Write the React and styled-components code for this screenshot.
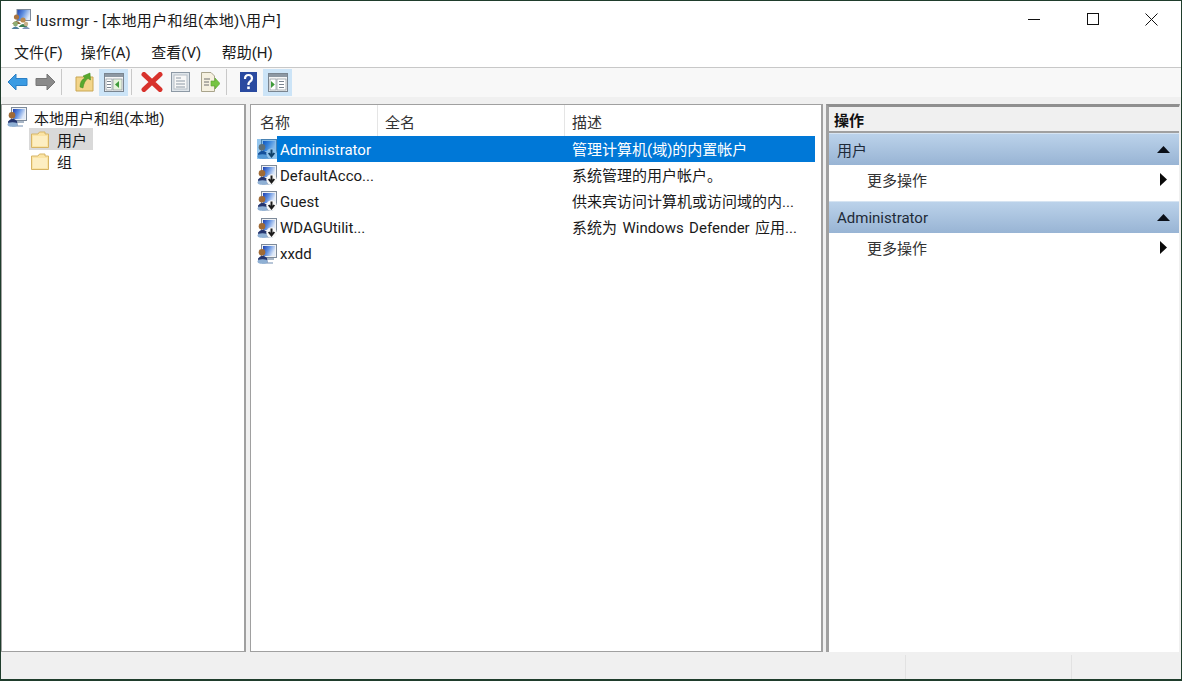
import styled, { createGlobalStyle } from "styled-components";

const GlobalStyle = createGlobalStyle`
    html, body {
        margin: 0;
        padding: 0;
        background: #fff;
    }
    * {
        box-sizing: border-box;
    }
`;

const Window = styled.div`
    width: 1182px;
    height: 681px;
    display: flex;
    flex-direction: column;
    border: 1px solid #1f3d2c;
    border-bottom-width: 2px;
    background: #f0f0f0;
    color: #1a1a1a;
    font-family: Roboto, "Noto Sans CJK SC", sans-serif;
    font-size: 15px;
    overflow: hidden;
`;

const TitleBar = styled.div`
    height: 37px;
    flex: none;
    display: flex;
    align-items: center;
    padding: 0 0 1px 10px;
    background: #fff;
`;

const TitleText = styled.span`
    margin-left: 5px;
    flex: 1;
    letter-spacing: 0.3px;
`;

const WinButton = styled.div`
    width: 59px;
    height: 37px;
    display: flex;
    align-items: center;
    justify-content: center;
`;

const MenuBar = styled.div`
    height: 30px;
    flex: none;
    display: flex;
    align-items: center;
    gap: 20.5px;
    padding: 0 0 2px 13px;
    background: #fff;
    border-bottom: 1px solid #c8c8c8;
`;

const MenuItem = styled.span`
    &:first-child {
        margin-right: -2.5px;
    }
`;

const Toolbar = styled.div`
    height: 29px;
    flex: none;
    display: flex;
    align-items: center;
    padding: 0 0 1px 2px;
    background: #f8f8f8;
`;

const ToolButton = styled.div`
    width: ${(p) => (p.$narrow ? 28 : 29)}px;
    height: 27px;
    margin-left: ${(p) => p.$left || 0}px;
    display: flex;
    align-items: center;
    justify-content: center;
    background: ${(p) => (p.$active ? "#cce4f7" : "transparent")};
`;

const ToolSep = styled.div`
    width: 1px;
    height: 26px;
    margin: 0 ${(p) => p.$gap}px;
    background: #c9c9c9;
`;

const Workspace = styled.div`
    flex: 1;
    min-height: 0;
    display: flex;
    padding-top: 7px;
    background: #f0f0f0;
`;

const Pane = styled.div`
    height: calc(100% + 1px);
    flex: none;
    background: #fff;
    border: 1px solid #a0a0a0;
    border-right-width: 2px;
    border-bottom-width: 2px;
`;

const TreePane = styled(Pane)`
    width: 245px;
    margin-right: 4px;
    padding: 1px 0 0 5px;
`;

const TreeRow = styled.div`
    height: 22px;
    display: flex;
    align-items: center;
    margin-left: ${(p) => p.$indent || 0}px;
`;

const TreeLabel = styled.span`
    height: 22px;
    display: flex;
    align-items: center;
    padding: 0 6px 0 ${(p) => p.$pad || 7}px;
`;

const FolderCell = styled.div`
    height: 22px;
    display: flex;
    align-items: center;
    width: fit-content;
    padding-left: 2px;
    background: ${(p) => (p.$selected ? "#d9d9d9" : "transparent")};
`;

const ListPane = styled(Pane)`
    width: 573px;
    margin-right: 3px;
    padding-right: 6px;
`;

const ListHeader = styled.div`
    height: 31px;
    display: grid;
    grid-template-columns: 127px 187px 1fr;
`;

const HeaderCell = styled.div`
    display: flex;
    align-items: center;
    padding: 2px 0 0 9px;
    border-right: 1px solid #e5e5e5;
    color: #333;
    &:nth-child(2) {
        padding-left: 7px;
    }
    &:last-child {
        border-right: none;
        padding-left: 7px;
    }
`;

const ListRow = styled.div`
    height: 26.2px;
    display: grid;
    grid-template-columns: 127px 187px 1fr;
`;

const NameCell = styled.div`
    display: flex;
    align-items: center;
    padding-left: 6px;
    min-width: 0;
`;

const NameText = styled.span`
    height: 100%;
    flex: 1;
    min-width: 0;
    display: flex;
    align-items: center;
    padding: 1px 0 0 3px;
    white-space: nowrap;
    background: ${(p) => (p.$selected ? "#0078d7" : "transparent")};
    color: ${(p) => (p.$selected ? "#fff" : "inherit")};
`;

const PlainCell = styled.div`
    display: flex;
    align-items: center;
    padding: 0 0 2px 7px;
    white-space: nowrap;
    word-spacing: 1.7px;
    background: ${(p) => (p.$selected ? "#0078d7" : "transparent")};
    color: ${(p) => (p.$selected ? "#fff" : "inherit")};
`;

const ActionPane = styled.div`
    width: 354px;
    height: calc(100% + 1px);
    flex: none;
    background: #fff;
    border-left: 3px solid #a0a0a0;
    border-top: 3px solid #8f8f8f;
    border-bottom: 1px solid #e0e0e0;
    border-right: 1px solid #f0f0f0;
`;

const ActionTitle = styled.div`
    height: 26px;
    display: flex;
    align-items: center;
    padding-left: 5px;
    background: #f0f0f0;
    border-bottom: 2px solid #a0a0a0;
    font-weight: 700;
    color: #111;
`;

const GroupHeader = styled.div`
    height: 32px;
    margin-top: ${(p) => p.$top || 0}px;
    display: flex;
    align-items: center;
    justify-content: space-between;
    padding: 0 9px 0 8px;
    background: linear-gradient(#bbd2ea, #98b4d4);
    border-top: 1px solid #d6e4f2;
    color: #1e2a38;
`;

const ActionItem = styled.div`
    height: 30px;
    display: flex;
    align-items: center;
    justify-content: space-between;
    padding: 0 12px 2px 38px;
    color: #333;
`;

const StatusBar = styled.div`
    height: 27px;
    flex: none;
    display: grid;
    grid-template-columns: 1fr 166px 110px;
    background: #f0f0f0;
`;

const StatusCell = styled.div`
    margin-top: 3px;
    border-left: ${(p) => (p.$first ? "none" : "1px solid #e2e2e2")};
`;

const UpTriangle = () => (
    <svg width="13" height="7" viewBox="0 0 13 7">
        <path d="M6.5 0 L13 7 H0 Z" fill="#0a0f18" />
    </svg>
);

const RightTriangle = () => (
    <svg width="7" height="13" viewBox="0 0 7 13">
        <path d="M0 0 L7 6.5 L0 13 Z" fill="#0a0a0a" />
    </svg>
);

// shared fill for the little monitor screens
const IconDefs = () => (
    <svg width="0" height="0" style={{ position: "absolute" }}>
        <defs>
            <linearGradient id="screen" x1="0" y1="0" x2="1" y2="0.4">
                <stop offset="0" stopColor="#1c3fb0" />
                <stop offset="0.5" stopColor="#5f8fe0" />
                <stop offset="1" stopColor="#dfe9f8" />
            </linearGradient>
        </defs>
    </svg>
);

const TitleIcon = () => (
    <svg width="20" height="20" viewBox="0 0 20 20">
        <rect x="6" y="0.5" width="13.5" height="11" fill="url(#screen)" stroke="#7d8a9a" />
        <circle cx="5.5" cy="8" r="2.6" fill="#a9743f" />
        <path d="M1 15 Q5.5 9 10 15 Z" fill="#8c6a3a" />
        <circle cx="12" cy="11" r="2.6" fill="#b98a4e" />
        <path d="M7.5 18 Q12 12 16.5 18 Z" fill="#3c7f52" />
        <circle cx="4.5" cy="15" r="2.4" fill="#8fae74" />
        <path d="M0.5 20 Q4.5 15 8.5 20 Z" fill="#4f7f9c" />
        <circle cx="15" cy="15" r="2.2" fill="#c7b18b" />
        <path d="M11 20 Q15 15.5 19 20 Z" fill="#7d95b8" />
    </svg>
);

const ComputerUserIcon = ({ arrow, tint }) => (
    <svg width="20" height="20" viewBox="0 0 20 20">
        <rect x="4.5" y="0.5" width="15" height="13" fill="#eef1f5" stroke="#7d8a9a" />
        <rect x="6" y="2" width="12" height="10" fill="url(#screen)" />
        <rect x="9" y="14" width="8" height="2" fill="#a8b6c6" />
        <path d="M5 18 H16 V20 H5 Z" fill="#b7c6d8" />
        <path d="M1 14.5 Q5 9.5 10 14 L10.5 18.5 H1.5 Z" fill="#24356f" />
        <circle cx="5" cy="8.3" r="3.3" fill="#a06a35" />
        <ellipse cx="5.5" cy="17.5" rx="5" ry="2.3" fill="#8fb0d4" />
        {arrow && <circle cx="14.5" cy="14.5" r="5.2" fill="#f8f8f8" />}
        {arrow && <path d="M14.5 10.5 V16 M11.7 14 L14.5 17.5 L17.3 14" fill="none" stroke="#1c1c1c" strokeWidth="2" />}
        {tint && <rect width="20" height="20" fill="#0078d7" opacity="0.42" />}
    </svg>
);

const FolderIcon = () => (
    <svg width="18" height="17" viewBox="0 0 18 17">
        <path d="M0.5 3 H7 L8.5 1 H14 V3 H17.5 V16.5 H0.5 Z" fill="#fbe4a4" stroke="#d7b566" />
        <rect x="2" y="5" width="14" height="10" fill="#fdeec2" />
    </svg>
);

const ArrowBack = () => (
    <svg width="21" height="18" viewBox="0 0 21 18">
        <path d="M9 1 L1 9 L9 17 V12.5 H20 V5.5 H9 Z" fill="#3a9be3" stroke="#2b7fc4" />
    </svg>
);

const ArrowForward = () => (
    <svg width="21" height="18" viewBox="0 0 21 18">
        <path d="M12 1 L20 9 L12 17 V12.5 H1 V5.5 H12 Z" fill="#8a8a8a" stroke="#777" />
    </svg>
);

const FolderUp = () => (
    <svg width="19" height="20" viewBox="0 0 19 20">
        <path d="M1 5 H18 V19 H1 Z" fill="#f3d58a" stroke="#c9a653" />
        <path d="M5 15 Q5 8 10 6 L8 4 L15 1 L15.5 8 L13 6.5 Q9 9 8 16 Z" fill="#58a92e" stroke="#3f8a1f" strokeWidth="0.5" />
    </svg>
);

const PanelIcon = ({ flip }) => (
    <svg width="20" height="19" viewBox="0 0 20 19">
        <rect x="0.5" y="0.5" width="19" height="18" fill="#f6f6f6" stroke="#7a8590" />
        <rect x="1" y="1" width="18" height="3" fill="#8d98a3" />
        <rect x="2" y="6" width="6" height="11" fill="#fff" stroke="#8b949c" strokeWidth="0.7" />
        <rect x="9" y="6" width="9" height="11" fill={flip ? "#fff" : "#e6f3dc"} stroke="#8b949c" strokeWidth="0.7" />
        {flip ? (
            <path d="M3 8 L6.8 11.5 L3 15 Z" fill="#3f9b3a" />
        ) : (
            <path d="M15 8 L11 11.5 L15 15 Z" fill="#3f9b3a" />
        )}
        <path d={flip ? "M11 8.5 H16 M11 11.5 H16 M11 14.5 H16" : "M3 8.5 H7 M3 11.5 H7 M3 14.5 H7"} stroke="#7a8590" />
    </svg>
);

const DeleteIcon = () => (
    <svg width="22" height="20" viewBox="0 0 22 20">
        <path d="M3 2.5 L19 17.5 M19 2.5 L3 17.5" stroke="#d8322c" strokeWidth="5" strokeLinecap="round" />
    </svg>
);

const PropsIcon = () => (
    <svg width="19" height="20" viewBox="0 0 19 20">
        <rect x="0.5" y="0.5" width="18" height="19" fill="#dfe5ea" stroke="#8d99a5" />
        <rect x="3" y="3" width="13" height="14" fill="#f7f7f7" stroke="#b5bec6" />
        <path d="M5 6 H10 M5 9 H14 M5 12 H14 M5 15 H14" stroke="#8d99a5" />
    </svg>
);

const ExportIcon = () => (
    <svg width="20" height="20" viewBox="0 0 20 20">
        <path d="M1.5 0.5 H11 L14.5 4 V19.5 H1.5 Z" fill="#f6f1e0" stroke="#a9a48c" />
        <path d="M4 7 H10 M4 10 H9 M4 13 H9" stroke="#6f6f6f" />
        <path d="M11 9 H15 V6 L20 11.5 L15 17 V14 H11 Z" fill="#76c442" stroke="#5aa52c" strokeWidth="0.6" />
    </svg>
);

const HelpIcon = () => (
    <svg width="17" height="20" viewBox="0 0 17 20">
        <rect width="17" height="20" fill="#2a4aa0" />
        <path d="M5 7 Q5 3 8.5 3 Q12 3 12 6.5 Q12 8.5 9.5 10 L8.5 11.5 V13" fill="none" stroke="#fff" strokeWidth="2.2" />
        <rect x="7.2" y="14.5" width="2.6" height="2.6" fill="#fff" />
    </svg>
);

const users = [
    { name: "Administrator", desc: "管理计算机(域)的内置帐户", selected: true, down: true },
    { name: "DefaultAcco...", desc: "系统管理的用户帐户。", down: true },
    { name: "Guest", desc: "供来宾访问计算机或访问域的内...", down: true },
    { name: "WDAGUtilit...", desc: "系统为 Windows Defender 应用...", down: true },
    { name: "xxdd", desc: "" },
];

export default function App() {
    return (
        <>
            <GlobalStyle />
            <IconDefs />
            <Window>
                <TitleBar>
                    <TitleIcon />
                    <TitleText>lusrmgr - [本地用户和组(本地)\用户]</TitleText>
                    <WinButton>
                        <svg width="12" height="12" viewBox="0 0 12 12">
                            <path d="M0 6.5 H12" stroke="#111" />
                        </svg>
                    </WinButton>
                    <WinButton>
                        <svg width="12" height="12" viewBox="0 0 12 12">
                            <rect x="0.5" y="0.5" width="11" height="11" fill="none" stroke="#111" />
                        </svg>
                    </WinButton>
                    <WinButton>
                        <svg width="13" height="13" viewBox="0 0 13 13">
                            <path d="M0.5 0.5 L12.5 12.5 M12.5 0.5 L0.5 12.5" stroke="#111" />
                        </svg>
                    </WinButton>
                </TitleBar>
                <MenuBar>
                    <MenuItem>文件(F)</MenuItem>
                    <MenuItem>操作(A)</MenuItem>
                    <MenuItem>查看(V)</MenuItem>
                    <MenuItem>帮助(H)</MenuItem>
                </MenuBar>
                <Toolbar>
                    <ToolButton $narrow><ArrowBack /></ToolButton>
                    <ToolButton $narrow><ArrowForward /></ToolButton>
                    <ToolSep $gap={2} />
                    <ToolButton $left={6}><FolderUp /></ToolButton>
                    <ToolButton $active><PanelIcon /></ToolButton>
                    <ToolSep $gap={3} />
                    <ToolButton $left={2}><DeleteIcon /></ToolButton>
                    <ToolButton><PropsIcon /></ToolButton>
                    <ToolButton><ExportIcon /></ToolButton>
                    <ToolSep $gap={2} />
                    <ToolButton $left={5}><HelpIcon /></ToolButton>
                    <ToolButton $active><PanelIcon flip /></ToolButton>
                </Toolbar>
                <Workspace>
                    <TreePane>
                        <TreeRow>
                            <ComputerUserIcon />
                            <TreeLabel>本地用户和组(本地)</TreeLabel>
                        </TreeRow>
                        <TreeRow $indent={22}>
                            <FolderCell $selected>
                                <FolderIcon />
                                <TreeLabel $pad={8}>用户</TreeLabel>
                            </FolderCell>
                        </TreeRow>
                        <TreeRow $indent={22}>
                            <FolderCell>
                                <FolderIcon />
                                <TreeLabel $pad={8}>组</TreeLabel>
                            </FolderCell>
                        </TreeRow>
                    </TreePane>
                    <ListPane>
                        <ListHeader>
                            <HeaderCell>名称</HeaderCell>
                            <HeaderCell>全名</HeaderCell>
                            <HeaderCell>描述</HeaderCell>
                        </ListHeader>
                        {users.map((user) => (
                            <ListRow key={user.name}>
                                <NameCell>
                                    <ComputerUserIcon arrow={user.down} tint={user.selected} />
                                    <NameText $selected={user.selected}>{user.name}</NameText>
                                </NameCell>
                                <PlainCell $selected={user.selected} />
                                <PlainCell $selected={user.selected}>{user.desc}</PlainCell>
                            </ListRow>
                        ))}
                    </ListPane>
                    <ActionPane>
                        <ActionTitle>操作</ActionTitle>
                        <GroupHeader>
                            用户
                            <UpTriangle />
                        </GroupHeader>
                        <ActionItem>
                            更多操作
                            <RightTriangle />
                        </ActionItem>
                        <GroupHeader $top={6}>
                            Administrator
                            <UpTriangle />
                        </GroupHeader>
                        <ActionItem>
                            更多操作
                            <RightTriangle />
                        </ActionItem>
                    </ActionPane>
                </Workspace>
                <StatusBar>
                    <StatusCell $first />
                    <StatusCell />
                    <StatusCell />
                </StatusBar>
            </Window>
        </>
    );
}
